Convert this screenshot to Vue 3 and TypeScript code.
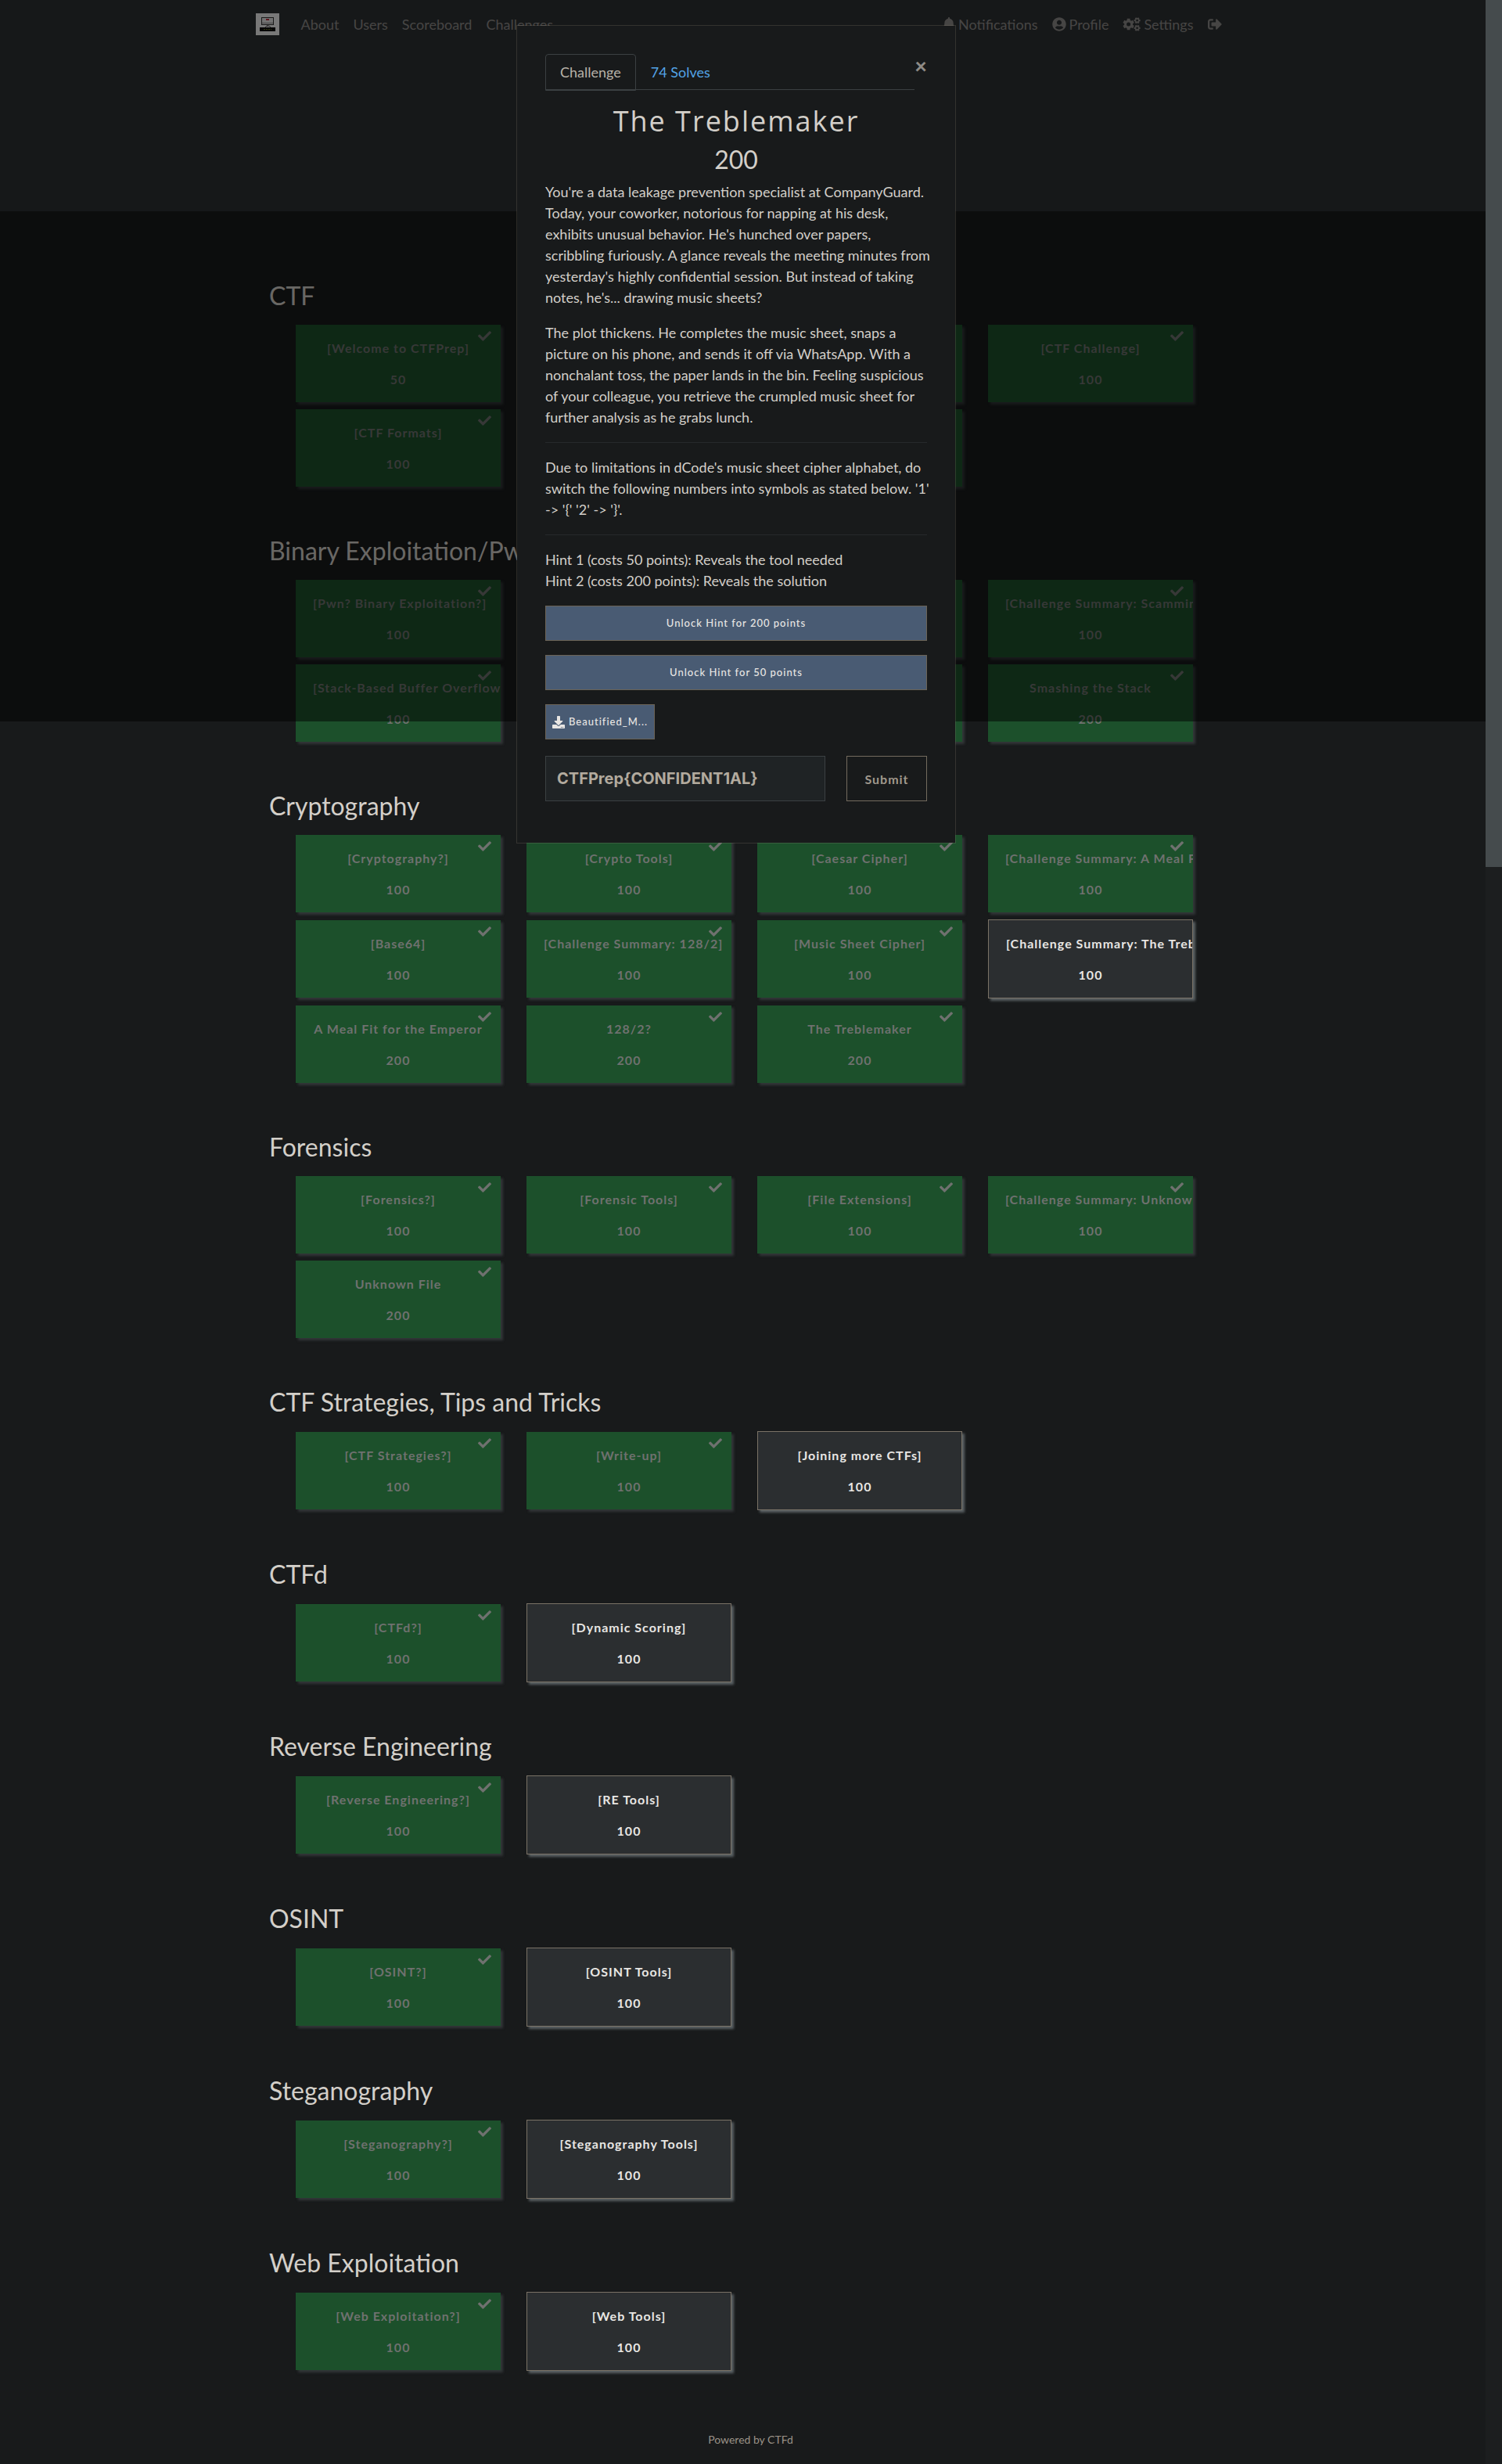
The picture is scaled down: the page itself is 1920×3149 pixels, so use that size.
<script setup lang="ts">
import { ref } from 'vue'

interface Challenge {
  name: string
  points: number | null
  solved: boolean
}
interface Category {
  title: string
  challenges: Challenge[]
}

const done = (name: string, points = 100): Challenge => ({ name, points, solved: true })
const open = (name: string, points = 100): Challenge => ({ name, points, solved: false })
// Cards that lie behind the dialog carry no label.
const covered = (): Challenge => ({ name: '', points: null, solved: true })

const categories: Category[] = [
  {
    title: 'CTF',
    challenges: [done('[Welcome to CTFPrep]', 50), covered(), covered(), done('[CTF Challenge]'), done('[CTF Formats]'), covered(), covered()],
  },
  {
    title: 'Binary Exploitation/Pwn',
    challenges: [
      done('[Pwn? Binary Exploitation?]'), covered(), covered(), done('[Challenge Summary: Scamming]'),
      done('[Stack-Based Buffer Overflow]'), covered(), covered(), done('Smashing the Stack', 200),
    ],
  },
  {
    title: 'Cryptography',
    challenges: [
      done('[Cryptography?]'), done('[Crypto Tools]'), done('[Caesar Cipher]'), done('[Challenge Summary: A Meal Fit for the Emperor]'),
      done('[Base64]'), done('[Challenge Summary: 128/2]'), done('[Music Sheet Cipher]'), open('[Challenge Summary: The Treblemaker]'),
      done('A Meal Fit for the Emperor', 200), done('128/2?', 200), done('The Treblemaker', 200),
    ],
  },
  {
    title: 'Forensics',
    challenges: [done('[Forensics?]'), done('[Forensic Tools]'), done('[File Extensions]'), done('[Challenge Summary: Unknown File]'), done('Unknown File', 200)],
  },
  { title: 'CTF Strategies, Tips and Tricks', challenges: [done('[CTF Strategies?]'), done('[Write-up]'), open('[Joining more CTFs]')] },
  { title: 'CTFd', challenges: [done('[CTFd?]'), open('[Dynamic Scoring]')] },
  { title: 'Reverse Engineering', challenges: [done('[Reverse Engineering?]'), open('[RE Tools]')] },
  { title: 'OSINT', challenges: [done('[OSINT?]'), open('[OSINT Tools]')] },
  { title: 'Steganography', challenges: [done('[Steganography?]'), open('[Steganography Tools]')] },
  { title: 'Web Exploitation', challenges: [done('[Web Exploitation?]'), open('[Web Tools]')] },
]

const flag = ref('CTFPrep{CONFIDENT1AL}')

// Outline of a toothed wheel with a round hole, for the settings icon.
function gear(cx: number, cy: number, outer: number, teeth: number, phase: number): string {
  const inner = outer * 0.74
  const hole = outer * 0.34
  const step = (Math.PI * 2) / teeth
  const at = (r: number, a: number) => `${(cx + r * Math.cos(a)).toFixed(1)} ${(cy + r * Math.sin(a)).toFixed(1)}`
  const points: string[] = []
  for (let i = 0; i < teeth; i++) {
    const a = phase + i * step
    points.push(at(inner, a - step * 0.36), at(outer, a - step * 0.24), at(outer, a + step * 0.24), at(inner, a + step * 0.36))
  }
  return `M${points.join('L')}ZM${cx - hole} ${cy}a${hole} ${hole} 0 1 0 ${hole * 2} 0a${hole} ${hole} 0 1 0 ${-hole * 2} 0Z`
}
const cogs = gear(210, 256, 212, 6, Math.PI / 6) + gear(522, 118, 118, 6, 0) + gear(522, 394, 118, 6, 0)
</script>

<template>
  <div class="page">
    <div class="screen">
      <header class="top">
        <nav class="nav">
          <a href="#" class="brand" aria-label="Home">
            <svg viewBox="0 0 30 28" width="30" height="28">
              <rect width="30" height="28" fill="#f0f0f0" />
              <rect x="7.500" y="5.500" width="15" height="9" fill="#e4e4e4" stroke="#333" />
              <path d="M13 7h4v2h-4z" fill="#c03040" />
              <path d="M8 12.500h14" stroke="#888" />
              <path d="M15 15v2M12 18l2-2h3l2 2" stroke="#555" fill="none" />
              <rect x="5" y="18" width="20" height="5" fill="#0c0c0c" />
              <path d="M10 20.500h10" stroke="#5c6a20" stroke-dasharray="2 1" />
            </svg>
          </a>
          <a href="#">About</a>
          <a href="#">Users</a>
          <a href="#">Scoreboard</a>
          <a href="#">Challenges</a>
          <span class="spring"></span>
          <a href="#">
            <svg class="ico" viewBox="0 0 448 512" width="16" height="18"><path d="M224 512c35.320 0 63.970-28.650 63.970-64H160.030c0 35.350 28.650 64 63.970 64zm215.390-149.710c-19.320-20.760-55.470-51.990-55.470-154.290 0-77.700-54.480-139.900-127.940-155.160V32c0-17.670-14.320-32-31.980-32s-31.980 14.330-31.980 32v20.840C118.560 68.100 64.080 130.300 64.080 208c0 102.300-36.150 133.530-55.470 154.290-6 6.450-8.660 14.160-8.610 21.710.11 16.400 12.980 32 32.100 32h383.800c19.120 0 32-15.600 32.100-32 .05-7.550-2.610-15.270-8.610-21.710z" /></svg>
            Notifications
          </a>
          <a href="#">
            <svg class="ico" viewBox="0 0 496 512" width="18" height="18"><path d="M248 8C111 8 0 119 0 256s111 248 248 248 248-111 248-248S385 8 248 8zm0 96c48.600 0 88 39.400 88 88s-39.400 88-88 88-88-39.400-88-88 39.400-88 88-88zm0 344c-58.700 0-111.300-26.600-146.500-68.200 18.800-35.400 55.600-59.800 98.500-59.800 2.400 0 4.800.4 7.100 1.100 13 4.200 26.600 6.900 40.900 6.900 14.300 0 28-2.700 40.900-6.900 2.300-.7 4.700-1.100 7.100-1.100 42.900 0 79.700 24.400 98.500 59.800C359.300 421.400 306.700 448 248 448z" /></svg>
            Profile
          </a>
          <a href="#">
            <svg class="ico" viewBox="0 0 640 512" width="23" height="18"><path :d="cogs" fill-rule="evenodd" /></svg>
            Settings
          </a>
          <a href="#" aria-label="Logout">
            <svg class="ico" viewBox="0 0 512 512" width="18" height="18"><path d="M497 273L329 441c-15 15-41 4.500-41-17v-96H152c-13.300 0-24-10.700-24-24v-96c0-13.300 10.700-24 24-24h136V88c0-21.400 25.900-32 41-17l168 168c9.300 9.400 9.300 24.600 0 34zM192 436v-40c0-6.600-5.400-12-12-12H96c-17.700 0-32-14.300-32-32V160c0-17.700 14.300-32 32-32h84c6.600 0 12-5.400 12-12V76c0-6.600-5.400-12-12-12H96c-53 0-96 43-96 96v192c0 53 43 96 96 96h84c6.600 0 12-5.400 12-12z" /></svg>
          </a>
        </nav>
      </header>

      <main class="board">
        <section v-for="category in categories" :key="category.title" class="category">
          <h3>{{ category.title }}</h3>
          <div class="cards">
            <button v-for="(item, index) in category.challenges" :key="index" type="button" class="card" :class="{ solved: item.solved }">
              <svg v-if="item.solved" class="check" viewBox="0 0 512 512" width="17" height="17"><path d="M173.898 439.404l-166.400-166.400c-9.997-9.997-9.997-26.206 0-36.204l36.203-36.204c9.997-9.998 26.207-9.998 36.204 0L192 312.690 432.095 72.596c9.997-9.997 26.207-9.997 36.204 0l36.203 36.204c9.997 9.997 9.997 26.206 0 36.204l-294.400 294.401c-9.998 9.997-26.207 9.997-36.204-.001z" /></svg>
              <span v-if="item.name" class="name">{{ item.name }}</span>
              <span v-if="item.points" class="points">{{ item.points }}</span>
            </button>
          </div>
        </section>
      </main>

      <footer class="foot"><a href="#">Powered by CTFd</a></footer>

      <div class="backdrop"></div>
      <div class="modal" role="dialog" aria-labelledby="challenge-title">
        <div class="tabs-row">
          <div class="tabs" role="tablist">
            <a href="#" class="tab active" role="tab">Challenge</a>
            <a href="#" class="tab" role="tab">74 Solves</a>
          </div>
          <button type="button" class="close" aria-label="Close">×</button>
        </div>
        <h2 id="challenge-title">The Treblemaker</h2>
        <p class="value">200</p>
        <div class="prose">
          <p>You're a data leakage prevention specialist at CompanyGuard. Today, your coworker, notorious for napping at his desk, exhibits unusual behavior. He's hunched over papers, scribbling furiously. A glance reveals the meeting minutes from yesterday's highly confidential session. But instead of taking notes, he's... drawing music sheets?</p>
          <p>The plot thickens. He completes the music sheet, snaps a picture on his phone, and sends it off via WhatsApp. With a nonchalant toss, the paper lands in the bin. Feeling suspicious of your colleague, you retrieve the crumpled music sheet for further analysis as he grabs lunch.</p>
          <hr />
          <p>Due to limitations in dCode's music sheet cipher alphabet, do switch the following numbers into symbols as stated below. '1' -&gt; '{' '2' -&gt; '}'.</p>
          <hr />
          <p>Hint 1 (costs 50 points): Reveals the tool needed<br />Hint 2 (costs 200 points): Reveals the solution</p>
        </div>
        <div class="actions">
          <button type="button" class="hint">Unlock Hint for 200 points</button>
          <button type="button" class="hint">Unlock Hint for 50 points</button>
          <a href="#" class="hint file">
            <svg class="ico" viewBox="0 0 512 512" width="16" height="16"><path d="M216 0h80c13.300 0 24 10.700 24 24v168h87.700c17.800 0 26.700 21.500 14.100 34.100L269.700 378.300c-7.500 7.500-19.800 7.500-27.300 0L90.100 226.100c-12.600-12.600-3.700-34.100 14.100-34.100H192V24c0-13.300 10.700-24 24-24zm296 376v112c0 13.300-10.700 24-24 24H24c-13.300 0-24-10.700-24-24V376c0-13.300 10.700-24 24-24h146.700l49 49c20.100 20.100 52.500 20.100 72.600 0l49-49H488c13.300 0 24 10.700 24 24zm-124 88c0-11-9-20-20-20s-20 9-20 20 9 20 20 20 20-9 20-20zm64 0c0-11-9-20-20-20s-20 9-20 20 9 20 20 20 20-9 20-20z" /></svg>
            Beautified_M...
          </a>
        </div>
        <form class="answer" @submit.prevent>
          <input v-model="flag" type="text" aria-label="Flag" />
          <button type="submit">Submit</button>
        </form>
      </div>
    </div>
    <div class="scrollbar"><div class="thumb"></div></div>
  </div>
</template>

<style>
body {
  background: #181a1b;
}
</style>

<style scoped>
.page {
  display: flex;
  font-family: Lato, 'Liberation Sans', sans-serif;
  font-size: 18px;
  line-height: 27px;
  color: #d3cfc9;
}
.page * {
  box-sizing: border-box;
}
.screen {
  position: relative;
  flex: 1;
  min-width: 0;
}
.scrollbar {
  width: 21px;
  background: #1c1e1f;
}
.thumb {
  height: 1108px;
  background: #454b4d;
}
a {
  color: inherit;
  text-decoration: none;
}
.ico {
  fill: currentColor;
}

.top {
  height: 270px;
  background: #2d3033;
}
.nav {
  display: flex;
  align-items: center;
  max-width: 1282px;
  height: 62px;
  margin: 0 auto;
  padding: 0 20px 0 18px;
  color: #8d8b88;
}
.nav a {
  display: flex;
  align-items: center;
  gap: 4px;
  padding: 0 9px;
}
.nav a:last-child {
  padding-right: 9px;
}
.nav .brand {
  padding: 0;
  margin-right: 19px;
}
.spring {
  flex: 1;
}

.board {
  max-width: 1215px;
  margin: 0 auto;
  padding-top: 84px;
}
.category {
  padding-bottom: 58px;
}
h3 {
  margin: 0 0 13px;
  padding-left: 2px;
  font-size: 32px;
  font-weight: 400;
  line-height: 48px;
}
.cards {
  display: grid;
  grid-template-columns: repeat(4, minmax(0, 1fr));
  align-items: center;
  gap: 9px 33px;
  margin: 0 32px 0 36px;
}
.card {
  position: relative;
  display: flex;
  flex-direction: column;
  justify-content: center;
  gap: 13px;
  height: 101px;
  padding: 0 22px;
  overflow: hidden;
  border: 1px solid #7a7266;
  background: #2b2e30;
  box-shadow: 3px 3px 3px #5a6164;
  color: #e8e6e3;
  font: 700 16px/27px Lato, 'Liberation Sans', sans-serif;
  letter-spacing: 1px;
  text-align: center;
}
.card.solved {
  height: 99px;
  border: 0;
  background: #1c502b;
  box-shadow: 3px 3px 3px #323638;
  color: #6f716f;
}
.name {
  white-space: nowrap;
}
.check {
  position: absolute;
  top: 6px;
  right: 12px;
  fill: currentColor;
}
.foot {
  padding: 16px 0 19px;
  text-align: center;
  font-size: 14px;
  color: #9a9287;
}
.foot a {
  padding-left: 20px;
}

.backdrop {
  position: absolute;
  top: 0;
  left: 0;
  width: 100%;
  height: 922px;
  background: rgba(0, 0, 0, 0.5);
}
.modal {
  position: absolute;
  top: 32px;
  left: 0;
  right: 17px;
  width: 562px;
  margin: 0 auto;
  padding: 36px 36px 53px;
  border: 1px solid rgba(140, 130, 115, 0.25);
  background: #181a1b;
  background-clip: padding-box;
}
.tabs-row {
  display: flex;
  align-items: flex-start;
  justify-content: space-between;
}
.tabs {
  display: flex;
  width: 473px;
  height: 46px;
  border-bottom: 1px solid #3b4042;
}
.tab {
  height: 47px;
  padding: 9px 18px;
  border: 1px solid transparent;
  color: #53a4e6;
}
.tab.active {
  border-color: #3b4042;
  border-radius: 4px 4px 0 0;
  color: #b8b2a8;
}
.close {
  padding: 0;
  border: 0;
  background: none;
  color: #8e8b86;
  font: 900 27px/30px Lato, sans-serif;
}
h2 {
  margin: 18px 0 0;
  font-family: 'Open Sans', sans-serif;
  font-size: 36px;
  font-weight: 400;
  line-height: 43px;
  letter-spacing: 2px;
  text-align: center;
}
.modal p {
  margin: 0 0 18px;
}
.modal .value {
  margin: 9px 0;
  font-size: 32px;
  line-height: 38px;
  text-align: center;
}
.prose p {
  margin-right: -8px;
}
hr {
  margin: 0 0 18px;
  border: 0;
  border-top: 1px solid #26292b;
}
.actions {
  display: flex;
  flex-direction: column;
  align-items: flex-start;
  gap: 18px;
}
.hint {
  width: 100%;
  height: 45px;
  border: 1px solid #6b6356;
  background: #495b73;
  color: #e8e6e3;
  font: 500 13px/27px Lato, sans-serif;
  letter-spacing: 1px;
}
.file {
  display: flex;
  align-items: center;
  justify-content: center;
  gap: 5px;
  width: 140px;
}
.answer {
  display: flex;
  justify-content: space-between;
  margin-top: 21px;
}
.answer input {
  width: 358px;
  height: 58px;
  padding: 0 14px;
  border: 1px solid #3b4042;
  background: #1f2325;
  color: #b2aa9e;
  font: 700 20px/27px Inter, sans-serif;
}
.answer button {
  width: 103px;
  height: 58px;
  border: 1px solid #736b5e;
  background: none;
  color: #a0988c;
  font: 700 16px/27px Lato, sans-serif;
  letter-spacing: 1px;
}
</style>
